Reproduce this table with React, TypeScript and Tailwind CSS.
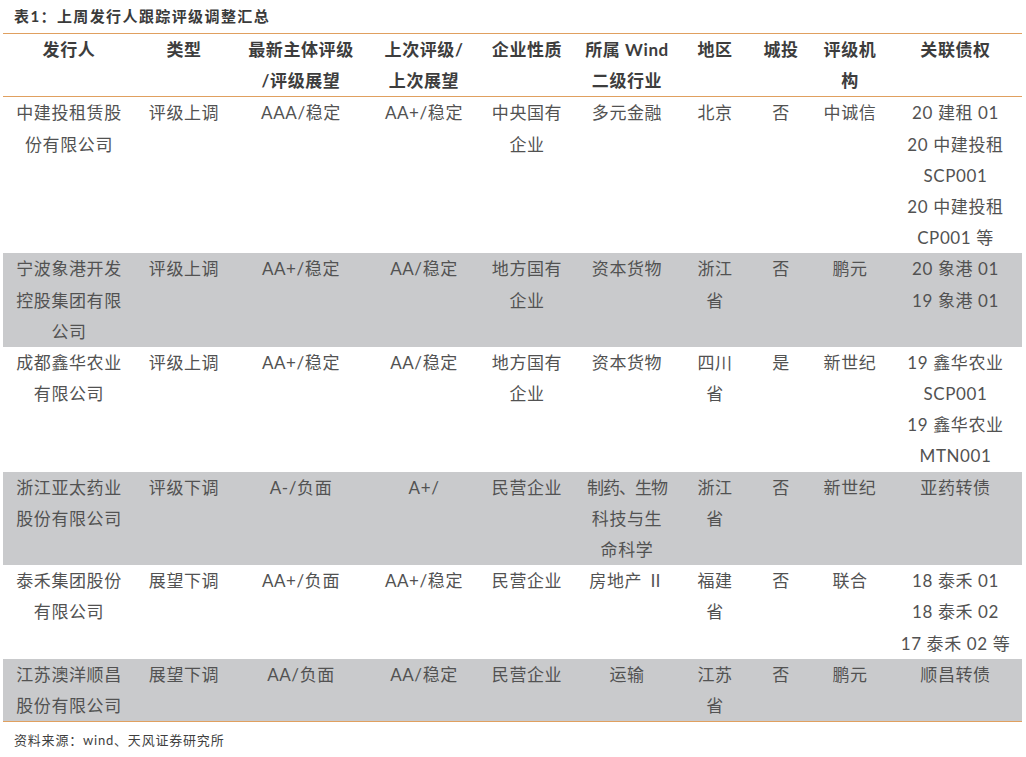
import type { ReactNode } from "react";

const HEAD: ReactNode[][] = [
  ["发行人"],
  ["类型"],
  ["最新主体评级", "/评级展望"],
  ["上次评级/", "上次展望"],
  ["企业性质"],
  ["所属 Wind", "二级行业"],
  ["地区"],
  ["城投"],
  ["评级机", "构"],
  ["关联债权"],
];

// 原表里这一行字距被压紧
const pharma = <span className="tracking-[-1px]">制药、生物</span>;

const ROWS: ReactNode[][][] = [
  [["中建投租赁股", "份有限公司"], ["评级上调"], ["AAA/稳定"], ["AA+/稳定"], ["中央国有", "企业"], ["多元金融"], ["北京"], ["否"], ["中诚信"], ["20 建租 01", "20 中建投租", "SCP001", "20 中建投租", "CP001 等"]],
  [["宁波象港开发", "控股集团有限", "公司"], ["评级上调"], ["AA+/稳定"], ["AA/稳定"], ["地方国有", "企业"], ["资本货物"], ["浙江", "省"], ["否"], ["鹏元"], ["20 象港 01", "19 象港 01"]],
  [["成都鑫华农业", "有限公司"], ["评级上调"], ["AA+/稳定"], ["AA/稳定"], ["地方国有", "企业"], ["资本货物"], ["四川", "省"], ["是"], ["新世纪"], ["19 鑫华农业", "SCP001", "19 鑫华农业", "MTN001"]],
  [["浙江亚太药业", "股份有限公司"], ["评级下调"], ["A-/负面"], ["A+/"], ["民营企业"], [pharma, "科技与生", "命科学"], ["浙江", "省"], ["否"], ["新世纪"], ["亚药转债"]],
  [["泰禾集团股份", "有限公司"], ["展望下调"], ["AA+/负面"], ["AA+/稳定"], ["民营企业"], ["房地产 Ⅱ"], ["福建", "省"], ["否"], ["联合"], ["18 泰禾 01", "18 泰禾 02", "17 泰禾 02 等"]],
  [["江苏澳洋顺昌", "股份有限公司"], ["展望下调"], ["AA/负面"], ["AA/稳定"], ["民营企业"], ["运输"], ["江苏", "省"], ["否"], ["鹏元"], ["顺昌转债"]],
];

const GRID = "grid grid-cols-[132px_98px_136px_110px_96px_104px_72px_60px_78px_1fr]";

function Cell({ lines }: { lines: ReactNode[] }) {
  return (
    <div className="flex flex-col items-center text-center">
      {lines.map((l, i) => (
        <div key={i} className="h-[31.2px] leading-[31.2px] whitespace-nowrap">
          {l}
        </div>
      ))}
    </div>
  );
}

export default function App() {
  return (
    <div
      className="w-[1026px] h-[757px] bg-white text-[#525252]"
      style={{ fontFamily: "Lato, 'Noto Sans CJK SC', sans-serif" }}
    >
      {/* 标题 */}
      <div className="h-[33px] flex items-center pl-[14px] text-[15px] font-bold tracking-[1.4px] text-[#3a3a3a]">
        表1：上周发行人跟踪评级调整汇总
      </div>

      <div className="mx-[3px] w-[1019px] border-t border-b border-[#e0a060] text-[17px] tracking-[0.6px]">
        <div className={`${GRID} border-b border-[#e0a060] font-bold text-[#3d3d3d]`}>
          {HEAD.map((h, i) => (
            <Cell key={i} lines={h} />
          ))}
        </div>
        {ROWS.map((row, r) => (
          <div key={r} className={`${GRID} ${r % 2 === 1 ? "bg-[#c9cacc]" : "bg-white"}`}>
            {row.map((c, i) => (
              <Cell key={i} lines={c} />
            ))}
          </div>
        ))}
      </div>

      <div className="mt-[8px] pl-[14px] text-[13px] leading-[20px] tracking-[0.8px] text-[#3f3f3f]">
        资料来源：wind、天风证券研究所
      </div>
    </div>
  );
}
